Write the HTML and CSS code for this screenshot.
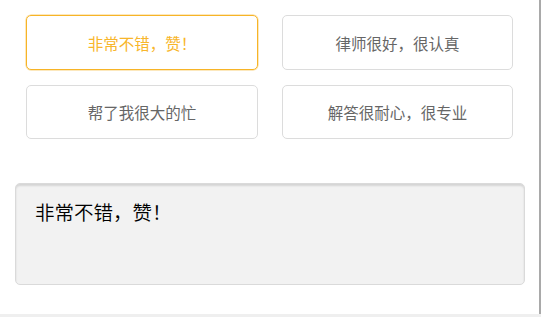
FILE: index.html
```html
<!DOCTYPE html>
<html lang="zh-CN">
<head>
<meta charset="utf-8">
<link rel="stylesheet" href="styles.css">
</head>
<body>
<div class="frame">
  <div class="page">
    <div class="tags">
      <div class="tag active">非常不错，赞！</div>
      <div class="tag">律师很好，很认真</div>
      <div class="tag">帮了我很大的忙</div>
      <div class="tag">解答很耐心，很专业</div>
    </div>
    <div class="comment">非常不错，赞！</div>
  </div>
  <div class="edge"></div>
</div>
<div class="bottom"></div>
</body>
</html>
```
FILE: styles.css
```css
html, body {
  margin: 0;
  padding: 0;
  background: #fff;
}
body {
  width: 541px;
  height: 317px;
  overflow: hidden;
  font-family: "Noto Sans CJK SC", "Noto Sans", sans-serif;
  display: flex;
  flex-direction: column;
}
.frame {
  display: flex;
  height: 314px;
}
.page {
  width: 539px;
  display: flex;
  flex-direction: column;
}
.edge {
  width: 2px;
  background: #a9a9a9;
}
.bottom {
  height: 3px;
  background: #efefef;
}
.tags {
  display: grid;
  grid-template-columns: 232px 231px;
  column-gap: 24px;
  row-gap: 15px;
  padding: 15px 0 0 26px;
}
.tag {
  box-sizing: border-box;
  height: 55px;
  border: 1px solid #dcdcdc;
  border-radius: 5px;
  display: flex;
  align-items: center;
  justify-content: center;
  font-size: 15.5px;
  color: #666;
}
.tag:nth-child(n+3) {
  height: 54px;
}
.tag.active {
  border-color: #f7b427;
  box-shadow: 0 0 0 0.5px rgba(247, 180, 39, 0.6);
  color: #f8b62b;
}
.comment {
  box-sizing: border-box;
  margin: 44px 14px 0 15px;
  height: 102px;
  background: #f2f2f2;
  border: 1px solid #dadada;
  border-radius: 5px;
  box-shadow: inset 0 2px 2px rgba(0, 0, 0, 0.12);
  padding: 14px 0 0 19px;
  font-size: 19.5px;
  font-weight: 350;
  line-height: 28px;
  color: #000;
}
```
